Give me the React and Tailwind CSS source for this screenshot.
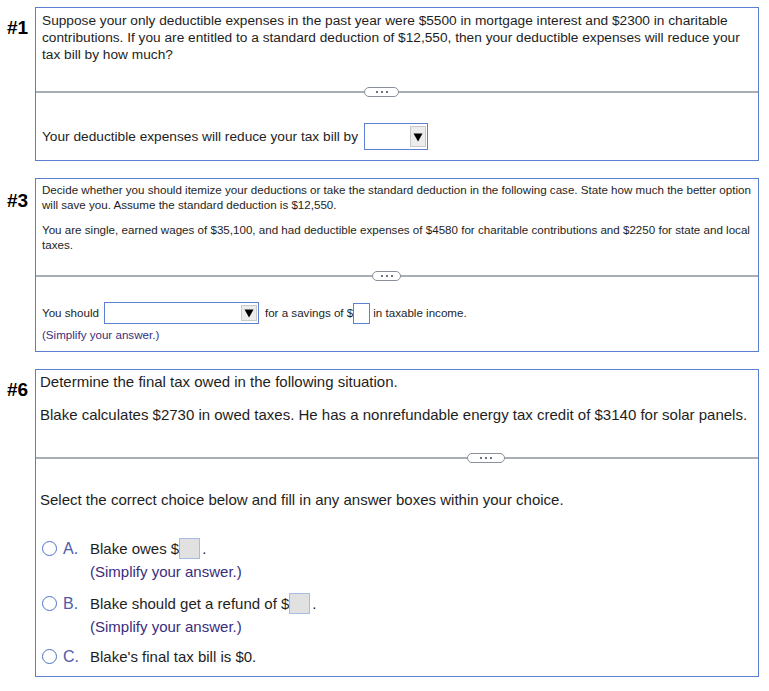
import React from "react";

// Small pill button sitting on the section divider
function Divider({ left, width = 35 }) {
  return (
    <div className="relative h-[2px] bg-[#a9aeb6]">
      <div
        className="absolute top-[-4px] h-[10px] rounded-full border border-[#8a9099] bg-white flex items-center justify-center gap-[3px]"
        style={{ left, width }}
      >
        <span className="w-[2px] h-[2px] bg-[#6b7280]" />
        <span className="w-[2px] h-[2px] bg-[#6b7280]" />
        <span className="w-[2px] h-[2px] bg-[#6b7280]" />
      </div>
    </div>
  );
}

function Select({ w, h }) {
  return (
    <div
      className="border border-[#5b80d4] bg-white flex items-center justify-end pr-[1px]"
      style={{ width: w, height: h }}
    >
      <div className="h-[calc(100%-4px)] w-[16px] bg-[#ececec] border border-[#c9c9c9] flex items-center justify-center">
        <svg width="10" height="10" viewBox="0 0 10 10">
          <path d="M0.5 1.5 L9.5 1.5 L5 9.5 Z" fill="#000" />
        </svg>
      </div>
    </div>
  );
}

function Label({ children, pt }) {
  return (
    <div className={`w-[35px] shrink-0 pl-[7px] ${pt} text-[19px] leading-[20px] font-bold text-black`}>
      {children}
    </div>
  );
}

function Radio({ letter, children }) {
  return (
    <div className="flex items-start">
      <div className="w-[50px] shrink-0 flex items-center pl-[2px] h-[21px]">
        <span className="w-[15px] h-[15px] rounded-full border-[1.5px] border-[#4e72c6] bg-white" />
        <span className="ml-[6px] text-[16px] font-medium text-[#4c5ca8]">{letter}</span>
      </div>
      <div>{children}</div>
    </div>
  );
}

function GrayBox({ className = "" }) {
  return <span className={`inline-block w-[21px] h-[21px] bg-[#e1e1e1] border border-[#a6bbe6] align-middle ${className}`} />;
}

export default function App() {
  return (
    <div
      className="w-[769px] h-[691px] bg-white pt-[7px] text-[#1e1e1e]"
      style={{ fontFamily: '"Liberation Sans", Arial, sans-serif' }}
    >
      {/* #1 */}
      <div className="flex">
        <Label pt="pt-[11px]">#1</Label>
        <div className="w-[724px] border border-[#5b7fd0]">
          <div className="h-[83px] pl-[6px] pt-[4px] text-[13.7px] leading-[17px] whitespace-nowrap">
            Suppose your only deductible expenses in the past year were $5500 in mortgage interest and $2300 in charitable
            <br />
            contributions. If you are entitled to a standard deduction of $12,550, then your deductible expenses will reduce your
            <br />
            tax bill by how much?
          </div>
          <Divider left={328} width={35} />
          <div className="h-[67px] pl-[6px] pt-[30px] flex items-start text-[13.7px]">
            <span className="leading-[27px]">Your deductible expenses will reduce your tax bill by</span>
            <div className="ml-[6px]">
              <Select w={64} h={27} />
            </div>
          </div>
        </div>
      </div>

      {/* #3 */}
      <div className="flex mt-[17px]">
        <Label pt="pt-[13px]">#3</Label>
        <div className="w-[724px] border border-[#5b7fd0]">
          <div className="h-[96px] pl-[6px] pt-[3px] text-[11.6px] leading-[15px] whitespace-nowrap">
            <p>
              Decide whether you should itemize your deductions or take the standard deduction in the following case. State how much the better option
              <br />
              will save you. Assume the standard deduction is $12,550.
            </p>
            <p className="mt-[10px]">
              You are single, earned wages of $35,100, and had deductible expenses of $4580 for charitable contributions and $2250 for state and local
              <br />
              taxes.
            </p>
          </div>
          <Divider left={336} width={29} />
          <div className="h-[74px] pl-[6px] pt-[25px] text-[11.6px]">
            <div className="flex items-center h-[22px]">
              <span>You should</span>
              <div className="ml-[5px]">
                <Select w={155} h={22} />
              </div>
              <span className="ml-[6px]">for a savings of $</span>
              <span className="inline-block w-[17px] h-[21px] border border-[#5b80d4] bg-white" />
              <span className="ml-[3px]">in taxable income.</span>
            </div>
            <div className="leading-[15px] mt-[3px] text-[#3a2d7d]">(Simplify your answer.)</div>
          </div>
        </div>
      </div>

      {/* #6 */}
      <div className="flex mt-[17px]">
        <Label pt="pt-[11px]">#6</Label>
        <div className="w-[724px] border border-[#5b7fd0]">
          <div className="h-[87px] pl-[4px] pt-[3px] text-[15px] leading-[18px]">
            <p>Determine the final tax owed in the following situation.</p>
            <p className="mt-[15px]">
              Blake calculates $2730 in owed taxes. He has a nonrefundable energy tax credit of $3140 for solar panels.
            </p>
          </div>
          <Divider left={431} width={38} />
          <div className="h-[217px] pl-[4px] pt-[32px] text-[15px] leading-[18px]">
            <p>Select the correct choice below and fill in any answer boxes within your choice.</p>
            <div className="mt-[29px]">
              <Radio letter="A.">
                <div className="flex items-center h-[21px]">
                  <span>Blake owes $</span>
                  <GrayBox />
                  <span className="ml-[2px]">.</span>
                </div>
                <div className="mt-[4px] text-[#3a2d7d]">(Simplify your answer.)</div>
              </Radio>
            </div>
            <div className="mt-[12px]">
              <Radio letter="B.">
                <div className="flex items-center h-[21px]">
                  <span>Blake should get a refund of $</span>
                  <GrayBox />
                  <span className="ml-[2px]">.</span>
                </div>
                <div className="mt-[4px] text-[#3a2d7d]">(Simplify your answer.)</div>
              </Radio>
            </div>
            <div className="mt-[10px]">
              <Radio letter="C.">
                <div className="flex items-center h-[21px]">
                  <span>Blake's final tax bill is $0.</span>
                </div>
              </Radio>
            </div>
          </div>
        </div>
      </div>
    </div>
  );
}
